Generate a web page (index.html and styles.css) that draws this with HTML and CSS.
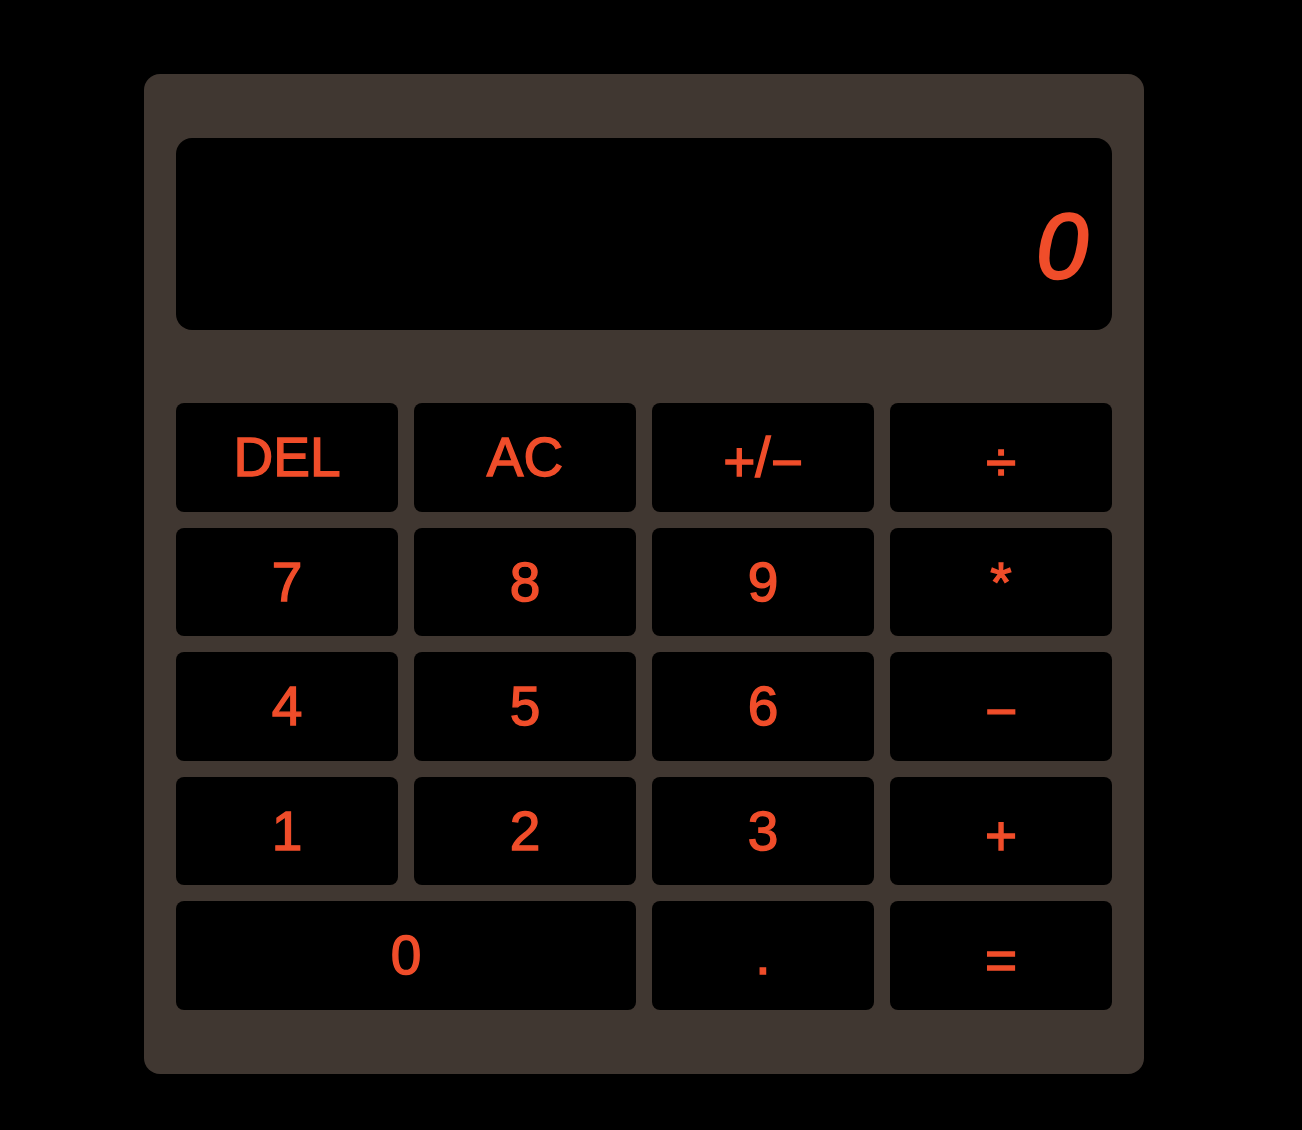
FILE: index.html
```html
<!DOCTYPE html>
<html lang="en">
<head>
<meta charset="utf-8">
<title>Calculator</title>
<link rel="stylesheet" href="styles.css">
</head>
<body>
<div class="calculator">
  <div class="display"><span class="value">0</span></div>
  <div class="keys">
    <button class="key">DEL</button>
    <button class="key">AC</button>
    <button class="key"><span class="op">+</span>/<span class="op">−</span></button>
    <button class="key"><span class="op">÷</span></button>
    <button class="key">7</button>
    <button class="key">8</button>
    <button class="key">9</button>
    <button class="key">*</button>
    <button class="key">4</button>
    <button class="key">5</button>
    <button class="key">6</button>
    <button class="key"><span class="op">−</span></button>
    <button class="key">1</button>
    <button class="key">2</button>
    <button class="key">3</button>
    <button class="key"><span class="op">+</span></button>
    <button class="key key-wide">0</button>
    <button class="key">.</button>
    <button class="key"><span class="op">=</span></button>
  </div>
</div>
</body>
</html>
```
FILE: styles.css
```css
html, body {
  margin: 0;
  padding: 0;
  background: #000;
}
body {
  padding: 74px 0 0 144px;
  font-family: "Liberation Sans", Arial, sans-serif;
}
.calculator {
  box-sizing: border-box;
  width: 1000px;
  height: 1000px;
  background: #403731;
  border-radius: 16px;
  padding: 64px 32px;
  display: flex;
  flex-direction: column;
}
.display {
  box-sizing: border-box;
  height: 192px;
  background: #000;
  border-radius: 16px;
  padding: 0 24px 30px;
  display: flex;
  justify-content: flex-end;
  align-items: flex-end;
  margin-bottom: 73px;
}
.value {
  color: #f04d2a;
  font-size: 93px;
  font-style: italic;
  line-height: 1.149;
  -webkit-text-stroke: 2.5px #f04d2a;
}
.keys {
  display: grid;
  grid-template-columns: repeat(4, 1fr);
  grid-auto-rows: 108.5px;
  gap: 16px;
}
.key {
  background: #000;
  border: none;
  border-radius: 8px;
  color: #f04d2a;
  font-family: "Liberation Sans", Arial, sans-serif;
  font-weight: 400;
  font-size: 55px;
  -webkit-text-stroke: 1.4px #f04d2a;
  padding: 0;
  margin: 0;
  display: flex;
  align-items: center;
  justify-content: center;
  cursor: pointer;
}
.op {
  display: inline-block;
  transform: translateY(5px);
}
.key-wide {
  grid-column: span 2;
}
```
